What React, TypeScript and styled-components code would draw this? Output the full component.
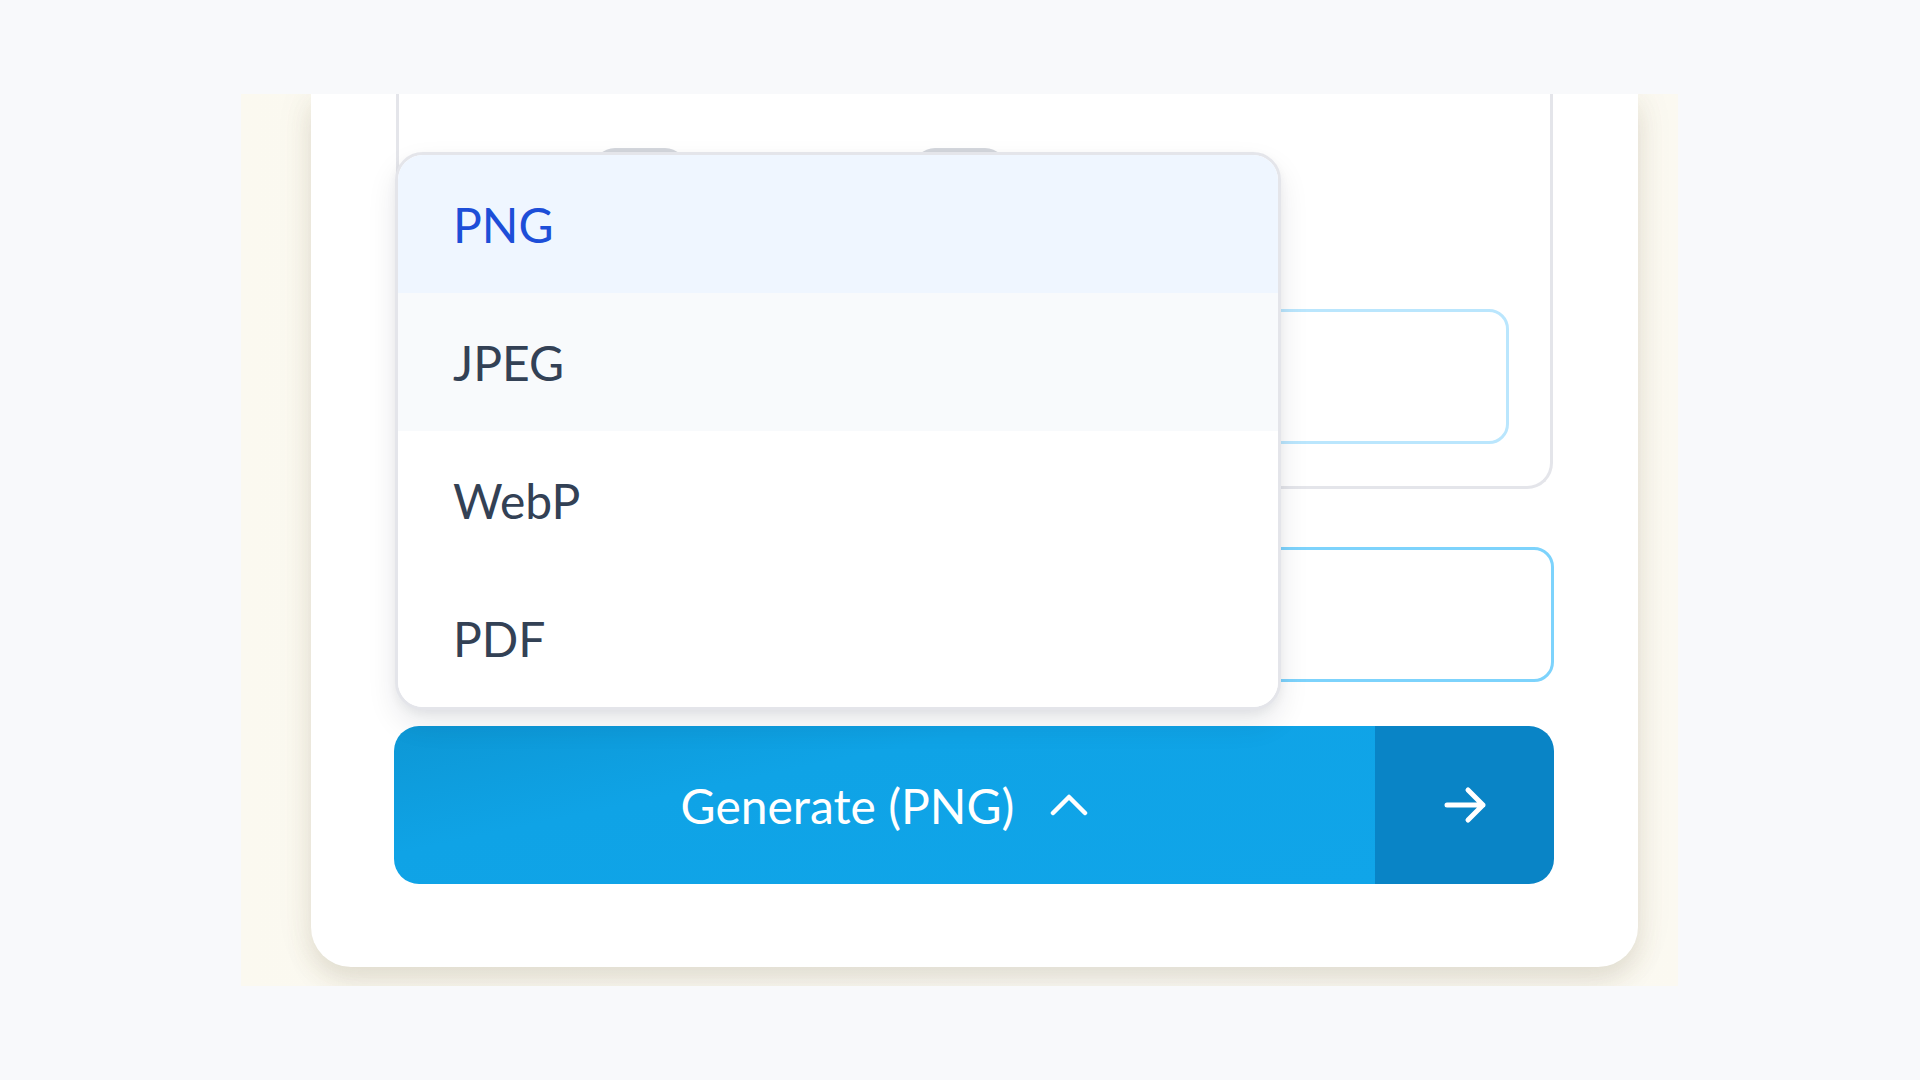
import styled, { createGlobalStyle } from 'styled-components';

const GlobalStyle = createGlobalStyle`
    html, body {
        margin: 0;
        padding: 0;
        background: #f8f9fb;
        font-family: Lato, "Noto Sans", sans-serif;
    }
    * {
        box-sizing: border-box;
    }
`;

type Format = {
    label: string;
    state: 'selected' | 'hover' | 'idle';
};

const formats: Format[] = [
    { label: 'PNG', state: 'selected' },
    { label: 'JPEG', state: 'hover' },
    { label: 'WebP', state: 'idle' },
    { label: 'PDF', state: 'idle' },
];

const ChevronUp = () => (
    <svg width="38" height="22" viewBox="0 0 38 22" fill="none">
        <path
            d="M3 19 L19 3 L35 19"
            stroke="#fff"
            strokeWidth="4.5"
            strokeLinecap="round"
            strokeLinejoin="round"
        />
    </svg>
);

const ArrowRight = () => (
    <svg width="44" height="38" viewBox="0 0 44 38" fill="none">
        <path
            d="M4 19 H40 M25 4 L40 19 L25 34"
            stroke="#fff"
            strokeWidth="5"
            strokeLinecap="round"
            strokeLinejoin="round"
        />
    </svg>
);

export default function App() {
    return (
        <>
            <GlobalStyle />
            <StyledPage>
                <StyledFrame>
                    <StyledCard>
                        <StyledPanel>
                            <StyledToggleRow>
                                <StyledPill />
                                <StyledPill />
                            </StyledToggleRow>
                            <StyledField $tone="soft" $inset />
                        </StyledPanel>
                        <StyledField $tone="strong" />
                        <StyledButton>
                            <StyledButtonMain>
                                <span>Generate (PNG)</span>
                                <ChevronUp />
                            </StyledButtonMain>
                            <StyledButtonSide>
                                <ArrowRight />
                            </StyledButtonSide>
                        </StyledButton>

                        <StyledMenu>
                            {formats.map((f) => (
                                <StyledOption key={f.label} $state={f.state}>
                                    {f.label}
                                </StyledOption>
                            ))}
                        </StyledMenu>
                    </StyledCard>
                </StyledFrame>
            </StyledPage>
        </>
    );
}

const StyledPage = styled.div`
    width: 1920px;
    height: 1080px;
    padding: 94px 0 0 241px;
    overflow: hidden;
`;

const StyledFrame = styled.div`
    width: 1437px;
    height: 892px;
    overflow: hidden;
    padding-left: 70px;
    background: linear-gradient(90deg, #fbf9f0 0%, #fcfbf6 60%, #fbf9f1 100%);
`;

const StyledCard = styled.div`
    position: relative;
    width: 1327px;
    height: 873px;
    background: #fff;
    border-radius: 0 0 40px 40px;
    padding: 0 84px 83px 83px;
    display: flex;
    flex-direction: column;
    box-shadow: 0 14px 26px rgba(100, 85, 55, 0.15),
        0 0 40px rgba(140, 120, 70, 0.07);
`;

const StyledPanel = styled.div`
    height: 395px;
    margin: 0 1px 58px 2px;
    border: 3px solid #e4e5ea;
    border-top: none;
    border-radius: 0 0 26px 26px;
    padding: 54px 41px 42px 40px;
    display: flex;
    flex-direction: column;
`;

const StyledToggleRow = styled.div`
    display: flex;
    gap: 226px;
    padding-left: 154px;
`;

const StyledPill = styled.div`
    width: 94px;
    height: 44px;
    border-radius: 22px;
    background: #d4d7dd;
`;

const StyledField = styled.div<{ $tone: 'soft' | 'strong'; $inset?: boolean }>`
    height: 135px;
    margin: ${(p) => (p.$inset ? 'auto 0 0 0' : '0 0 44px 44px')};
    border: 3px solid ${(p) => (p.$tone === 'soft' ? '#bae6fd' : '#7dd3fc')};
    border-radius: 20px;
    background: #fff;
`;

const StyledButton = styled.div`
    display: flex;
    height: 158px;
    border-radius: 25px;
    overflow: hidden;
`;

const StyledButtonMain = styled.div`
    flex: 1;
    display: flex;
    align-items: center;
    justify-content: center;
    gap: 36px;
    color: #fff;
    font-size: 48px;
    font-weight: 400;
    background: linear-gradient(168deg, #0d97d5 0%, #0fa3e6 35%, #10a5e9 100%);
`;

const StyledButtonSide = styled.div`
    width: 179px;
    display: flex;
    align-items: center;
    justify-content: center;
    background: #0984c6;
`;

const StyledMenu = styled.div`
    position: absolute;
    left: 84px;
    top: 58px;
    width: 886px;
    display: flex;
    flex-direction: column;
    background: #fff;
    border: 3px solid #e4e5ea;
    border-radius: 28px;
    overflow: hidden;
    box-shadow: 0 14px 30px rgba(15, 23, 42, 0.09),
        0 4px 10px rgba(15, 23, 42, 0.05);
`;

const StyledOption = styled.div<{ $state: Format['state'] }>`
    height: 138px;
    display: flex;
    align-items: center;
    padding-left: 55px;
    font-size: 48px;
    color: ${(p) => (p.$state === 'selected' ? '#1d4ed8' : '#334155')};
    background: ${(p) =>
        p.$state === 'selected'
            ? '#eff6ff'
            : p.$state === 'hover'
            ? '#f8fafc'
            : '#fff'};
`;
